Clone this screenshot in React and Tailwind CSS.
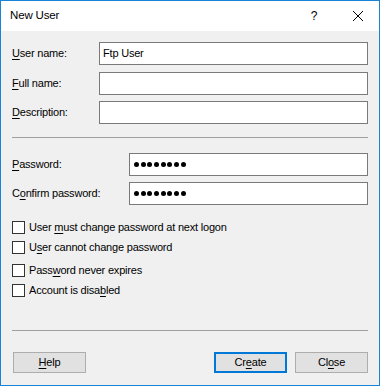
import React from "react";

function Acc({ text, at }) {
  // underline the access-key letter at index "at"
  return (
    <span>
      {text.slice(0, at)}
      <span className="underline underline-offset-[2px]">{text[at]}</span>
      {text.slice(at + 1)}
    </span>
  );
}

function TextRow({ label, at, value, inputLeft, mt }) {
  return (
    <div className={`flex items-center h-[23px] ${mt}`}>
      <label className={`shrink-0 ${inputLeft}`}>
        <Acc text={label} at={at} />
      </label>
      <div className="flex-1 h-full bg-white border border-[#7a7a7a] flex items-center px-[3px]">
        {value}
      </div>
    </div>
  );
}

function Dots() {
  return (
    <div className="flex gap-[1.7px] pl-[1px]">
      {[0, 1, 2, 3, 4, 5, 6, 7].map((i) => (
        <span key={i} className="w-[5px] h-[5px] rounded-full bg-black" />
      ))}
    </div>
  );
}

function Check({ text, at, mt }) {
  return (
    <div className={`flex items-center h-[13px] ${mt}`}>
      <span className="w-[13px] h-[13px] bg-white border border-[#333333] shrink-0" />
      <span className="ml-[4px]">
        <Acc text={text} at={at} />
      </span>
    </div>
  );
}

export default function App() {
  return (
    <div
      className="w-[380px] h-[386px] border border-[#1883d7] bg-[#f0f0f0] flex flex-col text-[11px] tracking-[-0.2px] leading-none text-black"
      style={{ fontFamily: '"Liberation Sans", Arial, sans-serif' }}
    >
      {/* title bar */}
      <div className="h-[30px] bg-white flex items-center shrink-0 text-[11.5px] tracking-[-0.15px]">
        <span className="ml-[9px] flex-1">New User</span>
        <span className="w-[12px] text-center mr-[32px] text-[12px]">?</span>
        <svg width="12" height="12" viewBox="0 0 12 12" className="mr-[15px]">
          <path d="M1 1 L11 11 M11 1 L1 11" stroke="#000" strokeWidth="1" />
        </svg>
      </div>

      <div className="flex-1 flex flex-col px-[11px]">
        <TextRow label="User name:" at={0} value="Ftp User" inputLeft="w-[87px]" mt="mt-[11px]" />
        <TextRow label="Full name:" at={0} value="" inputLeft="w-[87px]" mt="mt-[7px]" />
        <TextRow label="Description:" at={0} value="" inputLeft="w-[87px]" mt="mt-[6px]" />

        <div className="h-px bg-[#a0a0a0] mt-[13px]" />

        <TextRow label="Password:" at={0} value={<Dots />} inputLeft="w-[117px]" mt="mt-[15px]" />
        <TextRow label="Confirm password:" at={1} value={<Dots />} inputLeft="w-[117px]" mt="mt-[6px]" />

        <Check text="User must change password at next logon" at={5} mt="mt-[16px]" />
        <Check text="User cannot change password" at={1} mt="mt-[7px]" />
        <Check text="Password never expires" at={4} mt="mt-[10px]" />
        <Check text="Account is disabled" at={15} mt="mt-[7px]" />

        <div className="h-px bg-[#a0a0a0] mt-[33px]" />

        <div className="flex mt-[21px] pl-[1px]">
          <button className="w-[73px] h-[21px] bg-[#e1e1e1] border border-[#adadad]">
            <Acc text="Help" at={0} />
          </button>
          <button className="w-[73px] h-[21px] bg-[#e1e1e1] border-2 border-[#0078d7] ml-auto">
            <Acc text="Create" at={2} />
          </button>
          <button className="w-[73px] h-[21px] bg-[#e1e1e1] border border-[#adadad] ml-[8px]">
            <Acc text="Close" at={2} />
          </button>
        </div>
      </div>
    </div>
  );
}
